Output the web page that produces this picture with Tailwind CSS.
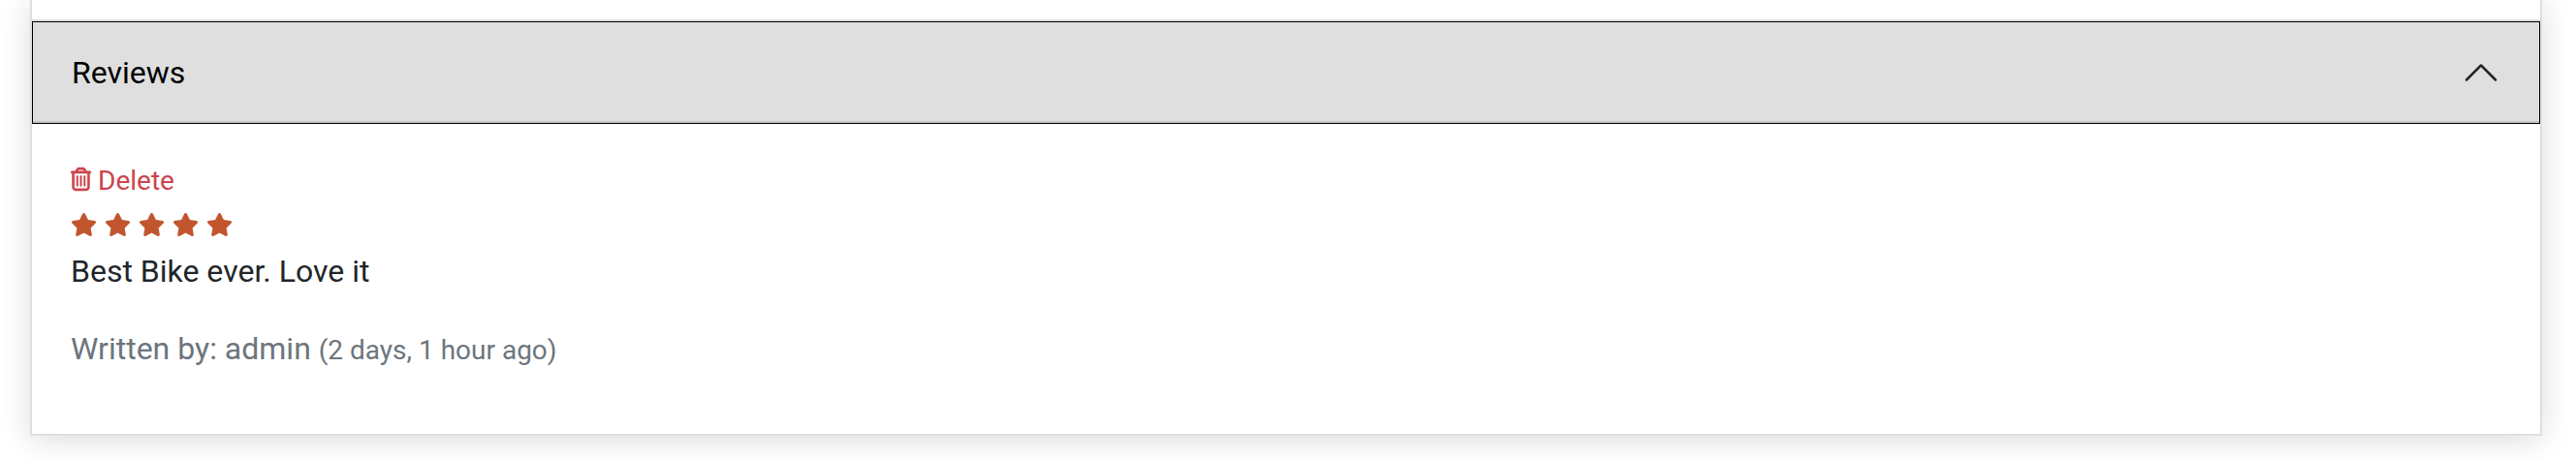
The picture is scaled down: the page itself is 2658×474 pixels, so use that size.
<!DOCTYPE html>
<html lang="en">
<head>
<meta charset="utf-8">
<title>Reviews</title>
<script src="https://cdn.jsdelivr.net/npm/@tailwindcss/browser@4"></script>
</head>
<body class="h-[474px] overflow-hidden bg-white font-['Roboto',sans-serif] text-[32px] leading-[48px] text-[#212529]">
<svg class="hidden"><symbol id="star" viewBox="0 0 576 512"><path d="M259.3 17.8L194 150.2 47.9 171.5c-26.2 3.8-36.7 36.1-17.7 54.6l105.7 103-25 145.5c-4.5 26.3 23.2 46 46.4 33.7L288 439.6l130.7 68.7c23.2 12.2 50.9-7.4 46.4-33.7l-25-145.5 105.7-103c19-18.5 8.5-50.8-17.7-54.6L382 150.2 316.7 17.8c-11.7-23.6-45.6-23.9-57.4 0z"/></symbol></svg>
<main class="ml-[31px] h-[450px] w-[2592px] border-x-2 border-b-2 border-[#dfdfdf] bg-white pt-5 shadow-[0_4px_30px_rgba(0,0,0,0.14)]">
  <div class="border-t-2 border-[#dfdfdf]">
    <button class="flex h-[106px] w-full items-center justify-between border border-black bg-[#dfdfdf] pr-10 pl-10 text-black shadow-[inset_0_-2px_0_rgba(0,0,0,0.125)]">
      <span>Reviews</span>
      <svg class="size-10 text-[#212529]" viewBox="0 0 16 16" fill="currentColor"><path fill-rule="evenodd" d="M14.354 11.354a.5.5 0 0 1-.708 0L8 5.707l-5.646 5.647a.5.5 0 0 1-.708-.708l6-6a.5.5 0 0 1 .708 0l6 6a.5.5 0 0 1 0 .708z"/></svg>
    </button>
  </div>
  <section class="px-10 pt-[38px]">
    <a class="flex h-[42px] items-center text-[28px] leading-[42px] text-[#cc444b]">
      <svg class="mr-[7px] mb-1 h-6 w-[21px] overflow-visible" viewBox="0 0 448 512" fill="currentColor" stroke="currentColor" stroke-width="10"><path d="M170.5 51.6L151.5 80h145l-19-28.4c-1.5-2.2-4-3.6-6.7-3.6H177.1c-2.7 0-5.2 1.3-6.7 3.6zm147-26.6L354.2 80H424c13.3 0 24 10.7 24 24s-10.7 24-24 24h-8V432c0 44.2-35.8 80-80 80H112c-44.2 0-80-35.8-80-80V128H24c-13.3 0-24-10.7-24-24S10.7 80 24 80H93.8l36.7-55.1C140.9 9.4 158.4 0 177.1 0h93.7c18.7 0 36.2 9.4 46.6 24.9zM80 128V432c0 17.7 14.3 32 32 32H336c17.7 0 32-14.3 32-32V128H80zm80 64V400c0 8.8-7.2 16-16 16s-16-7.2-16-16V192c0-8.8 7.2-16 16-16s16 7.2 16 16zm80 0V400c0 8.8-7.2 16-16 16s-16-7.2-16-16V192c0-8.8 7.2-16 16-16s16 7.2 16 16zm80 0V400c0 8.8-7.2 16-16 16s-16-7.2-16-16V192c0-8.8 7.2-16 16-16s16 7.2 16 16z"/></svg>
      <span>Delete</span>
    </a>
    <div class="flex h-12 items-center gap-2 text-[#c1562e]">
      <svg class="h-6 w-[27px]" fill="currentColor"><use href="#star"/></svg>
      <svg class="h-6 w-[27px]" fill="currentColor"><use href="#star"/></svg>
      <svg class="h-6 w-[27px]" fill="currentColor"><use href="#star"/></svg>
      <svg class="h-6 w-[27px]" fill="currentColor"><use href="#star"/></svg>
      <svg class="h-6 w-[27px]" fill="currentColor"><use href="#star"/></svg>
    </div>
    <p class="mb-8">Best Bike ever. Love it</p>
    <p class="text-[#6c757d]">Written by: admin <small class="text-[28px]">(2 days, 1 hour ago)</small></p>
  </section>
</main>
</body>
</html>
